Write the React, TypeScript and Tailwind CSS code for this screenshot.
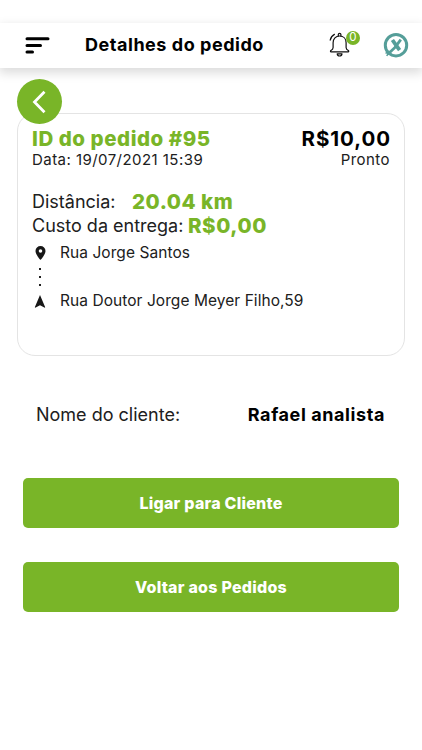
import type { ReactNode } from "react"

function MenuIcon() {
  return (
    <svg width="25" height="17" viewBox="0 0 25 17" stroke="#000" strokeWidth="3" strokeLinecap="round">
      <path d="M2 1.800h21M2 8.500h13.500M2 15h5.500" />
    </svg>
  )
}

function BellIcon() {
  return (
    <svg width="22" height="26" viewBox="0 0 22 26" fill="none" stroke="#111" strokeWidth="1.2" strokeLinejoin="round" strokeLinecap="round">
      <path d="M9.300 4V2.600a1.300 1.300 0 0 1 2.600 0V4" />
      <path d="M4.100 15.400v-4.600c0-4 2.700-6.800 6.500-6.800s6.500 2.800 6.500 6.800v4.600c0 1.500 1 2.400 2.200 3.200.6.4.6 1.200-.2 1.200H2.100c-.8 0-.8-.8-.2-1.200 1.200-.8 2.200-1.700 2.200-3.200Z" />
      <path d="M8.200 21.800c.2 1.400 1.200 2.200 2.400 2.200s2.200-.8 2.400-2.200Z" />
      <path d="M1.200 8.200C1.700 5.600 3.200 3.600 5.400 2.400" />
    </svg>
  )
}

function BrandIcon() {
  return (
    <svg width="26" height="26" viewBox="0 0 26 26" fill="none" stroke="#559e99">
      <circle cx="13" cy="13.200" r="10.700" strokeWidth="3" />
      <path d="M9.400 8 16.600 18.200" strokeWidth="3.800" />
      <path d="M17.800 7.600 12 15.400 4.800 22.200" strokeWidth="2.800" />
      <path d="M4.700 18.600 2.800 21.600M6.400 18.800l-2.600 5.200" strokeWidth="1.500" />
    </svg>
  )
}

function PinIcon() {
  return (
    <svg width="11" height="14" viewBox="0 0 11 14" fill="#171717">
      <path fillRule="evenodd" d="M5.500 0A5 5 0 0 0 .5 5c0 3.600 5 9 5 9s5-5.400 5-9a5 5 0 0 0-5-5Zm0 3.200a1.800 1.800 0 1 1 0 3.600 1.800 1.800 0 0 1 0-3.600Z" />
    </svg>
  )
}

function ArrowIcon() {
  return (
    <svg width="12" height="13" viewBox="0 0 12 13" fill="#171717">
      <path d="M6 0 11.200 12.200 10.800 12.700 6 10.300 1.200 12.700.8 12.200Z" />
    </svg>
  )
}

function ActionButton({ children }: { children: ReactNode }) {
  return (
    <button className="h-[50px] w-full rounded-[5px] bg-[#79b528] text-[16px] font-extrabold tracking-[0.24px] text-white">
      {children}
    </button>
  )
}

export default function App() {
  return (
    <div className="h-[750px] w-[422px] overflow-hidden bg-white pt-[23px] font-['Inter',sans-serif] whitespace-nowrap text-[#202020]">
      <header className="flex h-[45px] items-center bg-white pb-[1px] pl-[25px] shadow-[0_4px_10px_1px_rgba(0,0,0,0.14)]">
        <MenuIcon />
        <h1 className="ml-[35px] w-[180px] text-[18px] leading-[24px] font-bold tracking-[0.53px] text-black">Detalhes do pedido</h1>
        <div className="relative ml-[64px]">
          <BellIcon />
          <span className="absolute -top-[1px] left-[17px] flex size-[14px] items-center justify-center rounded-full bg-[#79b528] text-[11.500px] leading-none text-white">0</span>
        </div>
        <div className="ml-[32px]">
          <BrandIcon />
        </div>
      </header>

      <main className="relative px-[17px] pt-[45px]">
        {/* Back button sits over the card corner */}
        <button className="absolute top-[11px] left-[17px] flex size-[45px] items-center justify-center rounded-full bg-[#79b528] pr-[2px]">
          <svg width="14" height="24" viewBox="0 0 14 24" fill="none" stroke="#fff" strokeWidth="2.8">
            <path d="M12.500 1.800 2.500 12l10 10.200" />
          </svg>
        </button>

        <section className="h-[243px] w-[388px] rounded-[18px] border border-[#e4e4e4] px-[14px] pt-[13px]">
          <div className="flex justify-between leading-[24px]">
            <h2 className="text-[20.500px] font-extrabold tracking-[0.53px] text-[#79b528]">ID do pedido #95</h2>
            <span className="-mr-[1px] text-[20.500px] font-bold tracking-[0.95px] text-black">R$10,00</span>
          </div>
          <div className="flex justify-between text-[15px] leading-[18px] tracking-[0.45px]">
            <span>Data: 19/07/2021 15:39</span>
            <span>Pronto</span>
          </div>

          <div className="mt-[21px] flex text-[18px] leading-[24px]">
            <span className="w-[100px]">Distância:</span>
            <span className="text-[20.500px] font-extrabold tracking-[0.5px] text-[#79b528]">20.04 km</span>
          </div>
          <div className="flex text-[18px] leading-[24px]">
            <span className="w-[156px]">Custo da entrega:</span>
            <span className="text-[20.500px] font-extrabold tracking-[0.55px] text-[#79b528]">R$0,00</span>
          </div>

          <div className="mt-[5px] flex h-[20px] items-center text-[15.500px] tracking-[0.06px]">
            <span className="flex w-[28px] pl-[2.500px]"><PinIcon /></span>
            <span>Rua Jorge Santos</span>
          </div>
          <div className="flex h-[28px] flex-col justify-center gap-[6px] pl-[7px]">
            <span className="size-[2px] bg-[#202020]" />
            <span className="size-[2px] bg-[#202020]" />
            <span className="size-[2px] bg-[#202020]" />
          </div>
          <div className="flex h-[20px] items-center text-[15.500px] tracking-[0.06px]">
            <span className="flex w-[28px] pl-[2px]"><ArrowIcon /></span>
            <span>Rua Doutor Jorge Meyer Filho,59</span>
          </div>
        </section>

        <div className="mt-[47px] flex justify-between pr-[20px] pl-[19px] text-[18px] leading-[24px]">
          <span>Nome do cliente:</span>
          <span className="font-bold tracking-[0.59px] text-black">Rafael analista</span>
        </div>

        <div className="mt-[51px] flex flex-col gap-[34px] px-[6px]">
          <ActionButton>Ligar para Cliente</ActionButton>
          <ActionButton>Voltar aos Pedidos</ActionButton>
        </div>
      </main>
    </div>
  )
}
